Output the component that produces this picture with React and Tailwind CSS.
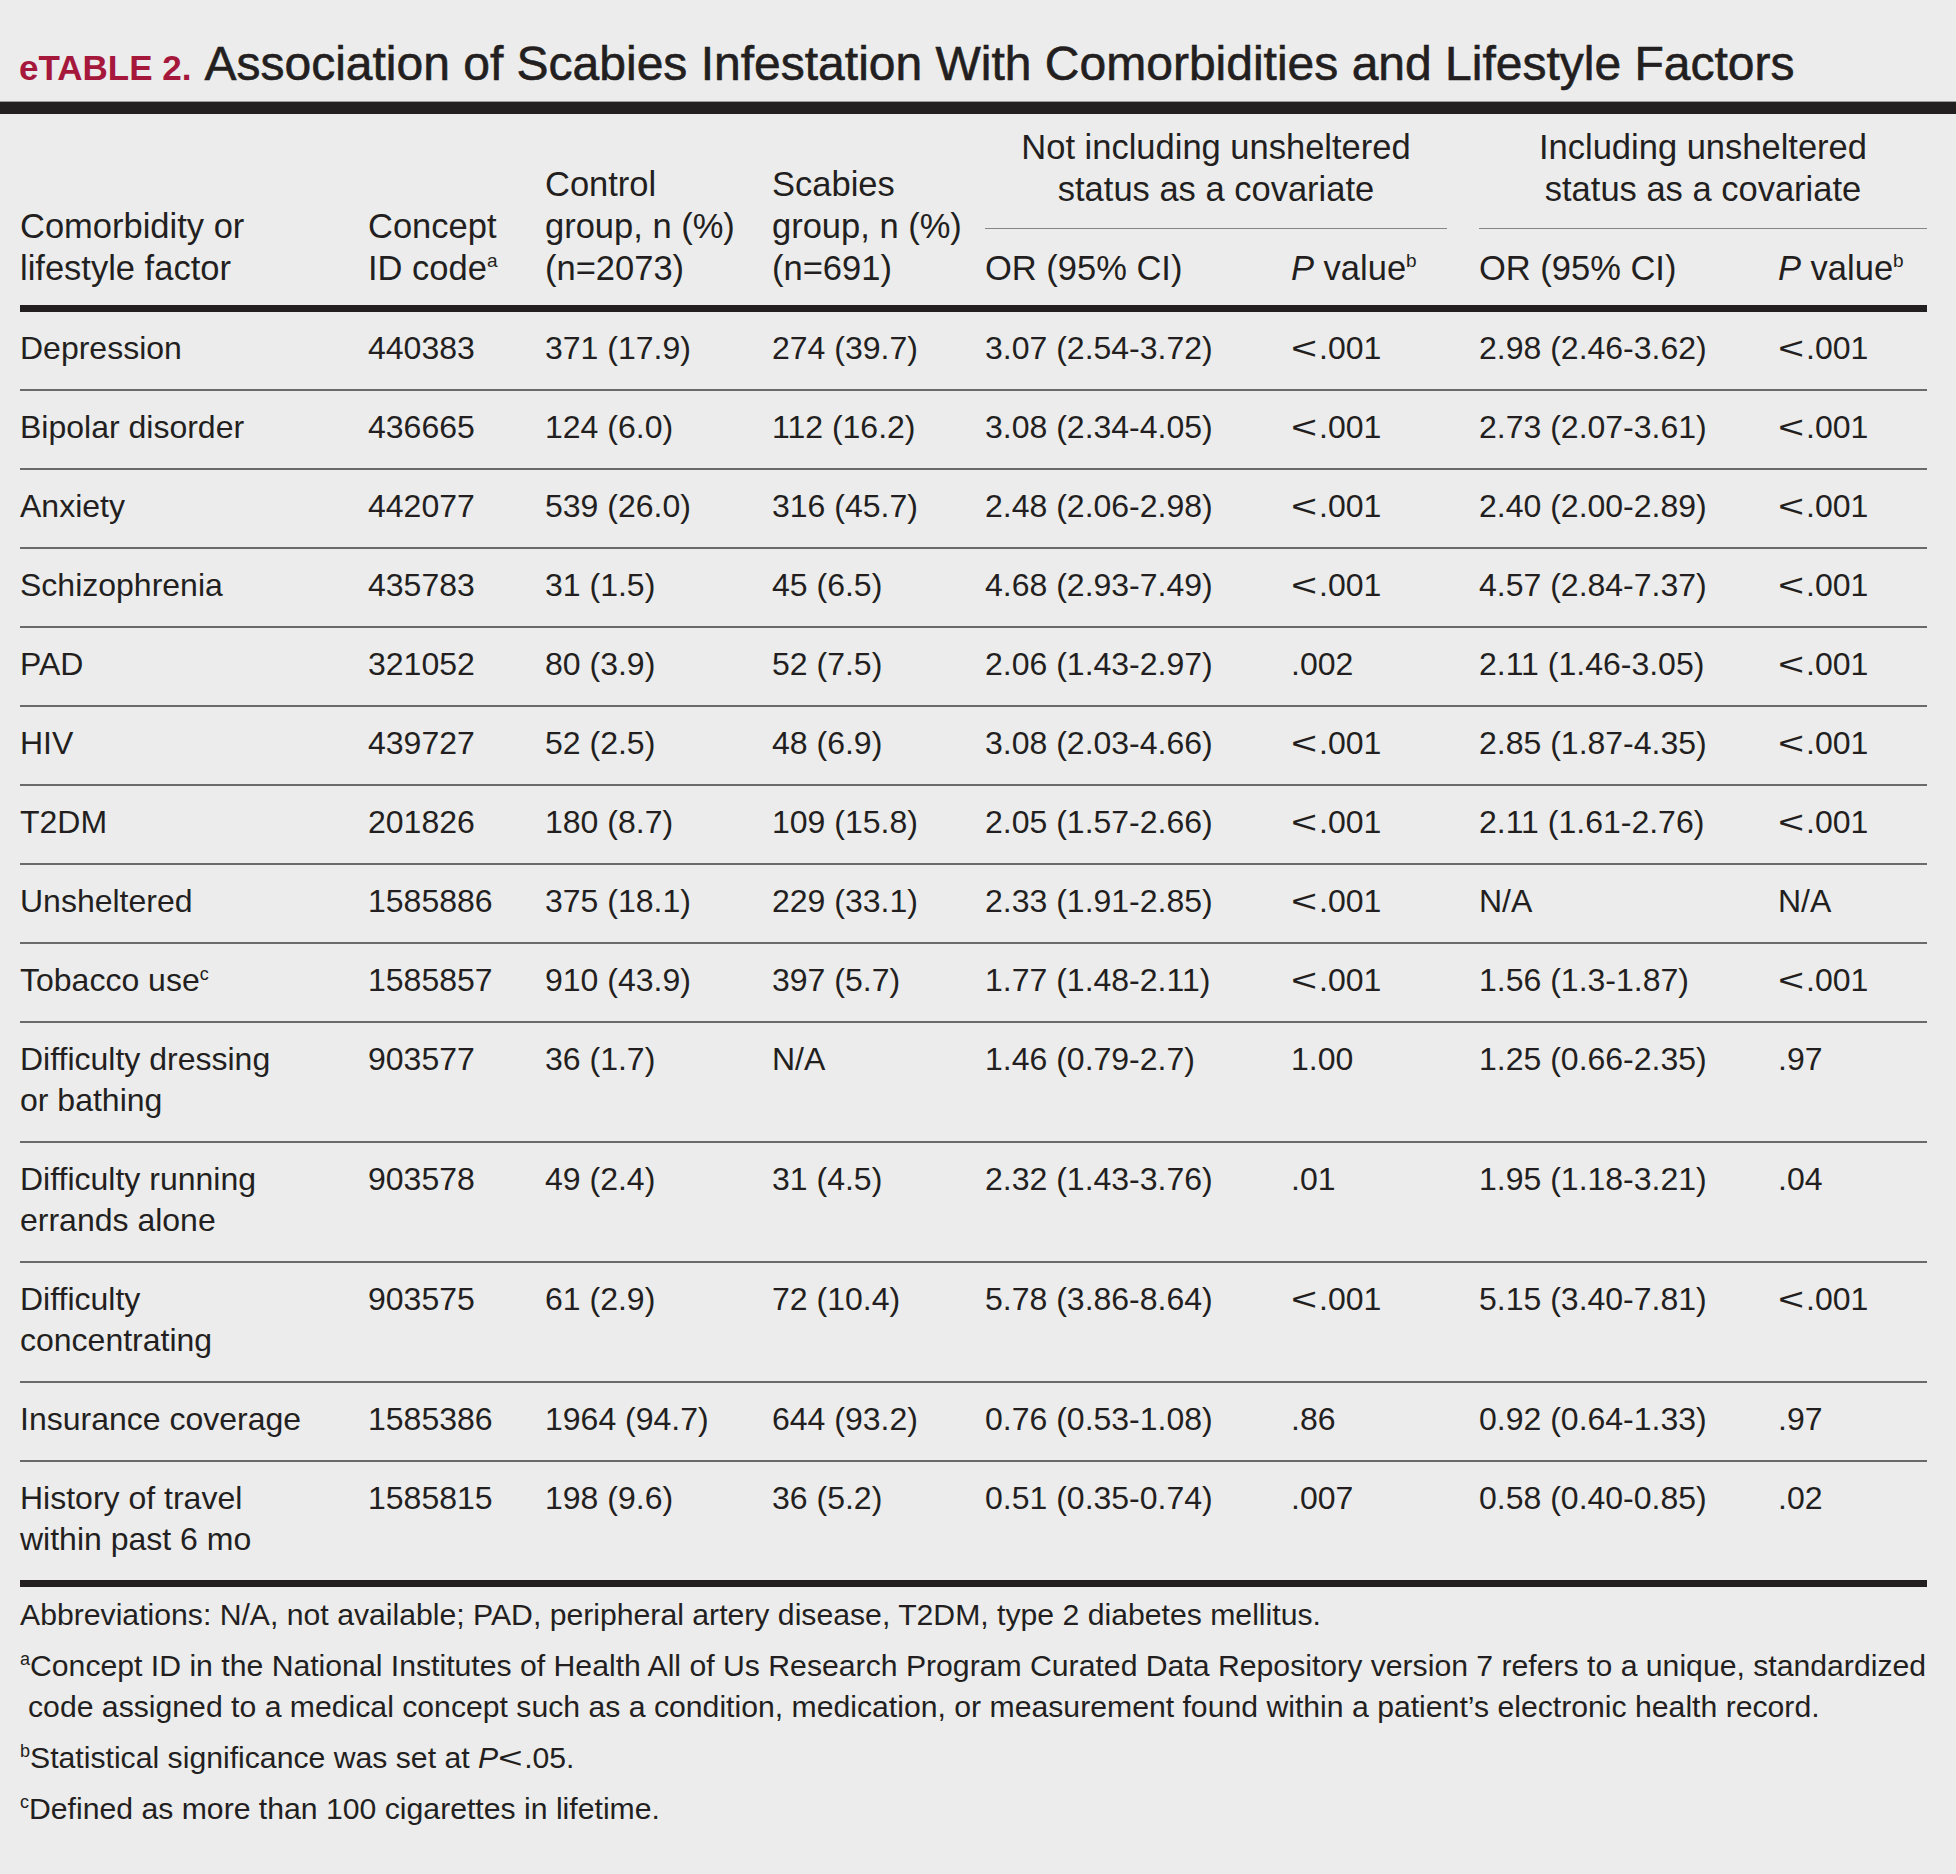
import React from "react";

const COLS = "grid grid-cols-[348px_177px_227px_213px_306px_188px_299px_149px]";

const Sup = ({ children, size = "text-[19px]", top = "-top-[12px]" }) => (
  <span className={`${size} leading-none relative ${top}`}>{children}</span>
);

const Lt = ({ w = "w-[28px]" }) => (
  <span className={`inline-block ${w}`}>
    <span className="inline-block scale-x-[1.4] origin-left">&lt;</span>
  </span>
);

const Val = ({ v }) => {
  if (v.startsWith("<")) {
    return (
      <div>
        <Lt />
        {v.slice(1)}
      </div>
    );
  }
  return <div>{v}</div>;
};

const rows = [
  [["Depression"], "440383", "371 (17.9)", "274 (39.7)", "3.07 (2.54-3.72)", "<.001", "2.98 (2.46-3.62)", "<.001"],
  [["Bipolar disorder"], "436665", "124 (6.0)", "112 (16.2)", "3.08 (2.34-4.05)", "<.001", "2.73 (2.07-3.61)", "<.001"],
  [["Anxiety"], "442077", "539 (26.0)", "316 (45.7)", "2.48 (2.06-2.98)", "<.001", "2.40 (2.00-2.89)", "<.001"],
  [["Schizophrenia"], "435783", "31 (1.5)", "45 (6.5)", "4.68 (2.93-7.49)", "<.001", "4.57 (2.84-7.37)", "<.001"],
  [["PAD"], "321052", "80 (3.9)", "52 (7.5)", "2.06 (1.43-2.97)", ".002", "2.11 (1.46-3.05)", "<.001"],
  [["HIV"], "439727", "52 (2.5)", "48 (6.9)", "3.08 (2.03-4.66)", "<.001", "2.85 (1.87-4.35)", "<.001"],
  [["T2DM"], "201826", "180 (8.7)", "109 (15.8)", "2.05 (1.57-2.66)", "<.001", "2.11 (1.61-2.76)", "<.001"],
  [["Unsheltered"], "1585886", "375 (18.1)", "229 (33.1)", "2.33 (1.91-2.85)", "<.001", "N/A", "N/A"],
  [["Tobacco use", "c"], "1585857", "910 (43.9)", "397 (5.7)", "1.77 (1.48-2.11)", "<.001", "1.56 (1.3-1.87)", "<.001"],
  [["Difficulty dressing", "or bathing"], "903577", "36 (1.7)", "N/A", "1.46 (0.79-2.7)", "1.00", "1.25 (0.66-2.35)", ".97"],
  [["Difficulty running", "errands alone"], "903578", "49 (2.4)", "31 (4.5)", "2.32 (1.43-3.76)", ".01", "1.95 (1.18-3.21)", ".04"],
  [["Difficulty", "concentrating"], "903575", "61 (2.9)", "72 (10.4)", "5.78 (3.86-8.64)", "<.001", "5.15 (3.40-7.81)", "<.001"],
  [["Insurance coverage"], "1585386", "1964 (94.7)", "644 (93.2)", "0.76 (0.53-1.08)", ".86", "0.92 (0.64-1.33)", ".97"],
  [["History of travel", "within past 6 mo"], "1585815", "198 (9.6)", "36 (5.2)", "0.51 (0.35-0.74)", ".007", "0.58 (0.40-0.85)", ".02"],
];

function FirstCell({ label }) {
  if (label[0] === "Tobacco use") {
    return (
      <div>
        Tobacco use<Sup size="text-[18px]" top="-top-[11px]">c</Sup>
      </div>
    );
  }
  return (
    <div>
      {label.map((l, i) => (
        <div key={i}>{l}</div>
      ))}
    </div>
  );
}

export default function App() {
  return (
    <div className="w-[1956px] h-[1874px] bg-[#ececec] text-[#231f20] font-['Liberation_Sans','Helvetica_Neue',Arial,sans-serif] overflow-hidden">
      {/* Title */}
      <div className="h-[101px] pt-[36px] pl-[19px] flex items-baseline gap-[13px] leading-[56px] whitespace-nowrap">
        <span className="text-[35px] font-bold text-[#a6173c]">eTABLE 2.</span>
        <span className="text-[48px] [-webkit-text-stroke:0.6px_#231f20]">
          Association of Scabies Infestation With Comorbidities and Lifestyle Factors
        </span>
      </div>
      {/* Top bar */}
      <div className="h-[13px] bg-[#231f20] border-t border-[#9c9c9c]" />

      <div className="ml-[20px] w-[1907px]">
        {/* Header */}
        <div className="flex h-[191px] text-[34.5px] leading-[42px]">
          <div className="w-[348px] flex flex-col justify-end pb-[16px]">
            <div>Comorbidity or</div>
            <div>lifestyle factor</div>
          </div>
          <div className="w-[177px] flex flex-col justify-end pb-[16px]">
            <div>Concept</div>
            <div>
              ID code<Sup size="text-[19px]" top="-top-[13px]">a</Sup>
            </div>
          </div>
          <div className="w-[227px] flex flex-col justify-end pb-[16px]">
            <div>Control</div>
            <div>group, n (%)</div>
            <div>(n=2073)</div>
          </div>
          <div className="w-[213px] flex flex-col justify-end pb-[16px]">
            <div>Scabies</div>
            <div>group, n (%)</div>
            <div>(n=691)</div>
          </div>
          <div className="w-[494px] flex flex-col pt-[12px]">
            <div className="w-[462px] text-center">
              <div>Not including unsheltered</div>
              <div>status as a covariate</div>
            </div>
            <div className="w-[462px] h-px bg-[#858585] mt-[18px]" />
            <div className="flex mt-[18px]">
              <div className="w-[306px]">OR (95% CI)</div>
              <div className="w-[188px]">
                <span className="italic">P</span> value<Sup size="text-[19px]" top="-top-[13px]">b</Sup>
              </div>
            </div>
          </div>
          <div className="w-[448px] flex flex-col pt-[12px]">
            <div className="w-[448px] text-center">
              <div>Including unsheltered</div>
              <div>status as a covariate</div>
            </div>
            <div className="w-[448px] h-px bg-[#858585] mt-[18px]" />
            <div className="flex mt-[18px]">
              <div className="w-[299px]">OR (95% CI)</div>
              <div className="w-[149px]">
                <span className="italic">P</span> value<Sup size="text-[19px]" top="-top-[13px]">b</Sup>
              </div>
            </div>
          </div>
        </div>
        <div className="h-[7px] bg-[#231f20]" />

        {/* Body */}
        <div className="text-[32px] leading-[41px]">
          {rows.map((r, i) => (
            <div
              key={i}
              className={`${COLS} pt-[16px] ${
                i === rows.length - 1 ? "pb-[20px]" : "pb-[20px] border-b-2 border-[#6a6a6a]"
              }`}
            >
              <FirstCell label={r[0]} />
              {r.slice(1).map((c, j) => (
                <Val key={j} v={c} />
              ))}
            </div>
          ))}
        </div>
        <div className="h-[7px] bg-[#231f20]" />

        {/* Footnotes */}
        <div className="text-[30.2px] leading-[41px] pt-[7px]">
          <p>Abbreviations: N/A, not available; PAD, peripheral artery disease, T2DM, type 2 diabetes mellitus.</p>
          <p className="mt-[10px] pl-[8px] -indent-[8px]">
            <Sup size="text-[18px]" top="-top-[11px]">a</Sup>Concept ID in the National Institutes of Health All of Us
            Research Program Curated Data Repository version 7 refers to a unique, standardized code assigned to a
            medical concept such as a condition, medication, or measurement found within a patient’s electronic
            health record.
          </p>
          <p className="mt-[10px]">
            <Sup size="text-[18px]" top="-top-[11px]">b</Sup>Statistical significance was set at{" "}
            <span className="italic">P</span>
            <Lt w="w-[26px]" />.05.
          </p>
          <p className="mt-[10px]">
            <Sup size="text-[18px]" top="-top-[11px]">c</Sup>Defined as more than 100 cigarettes in lifetime.
          </p>
        </div>
      </div>
    </div>
  );
}
